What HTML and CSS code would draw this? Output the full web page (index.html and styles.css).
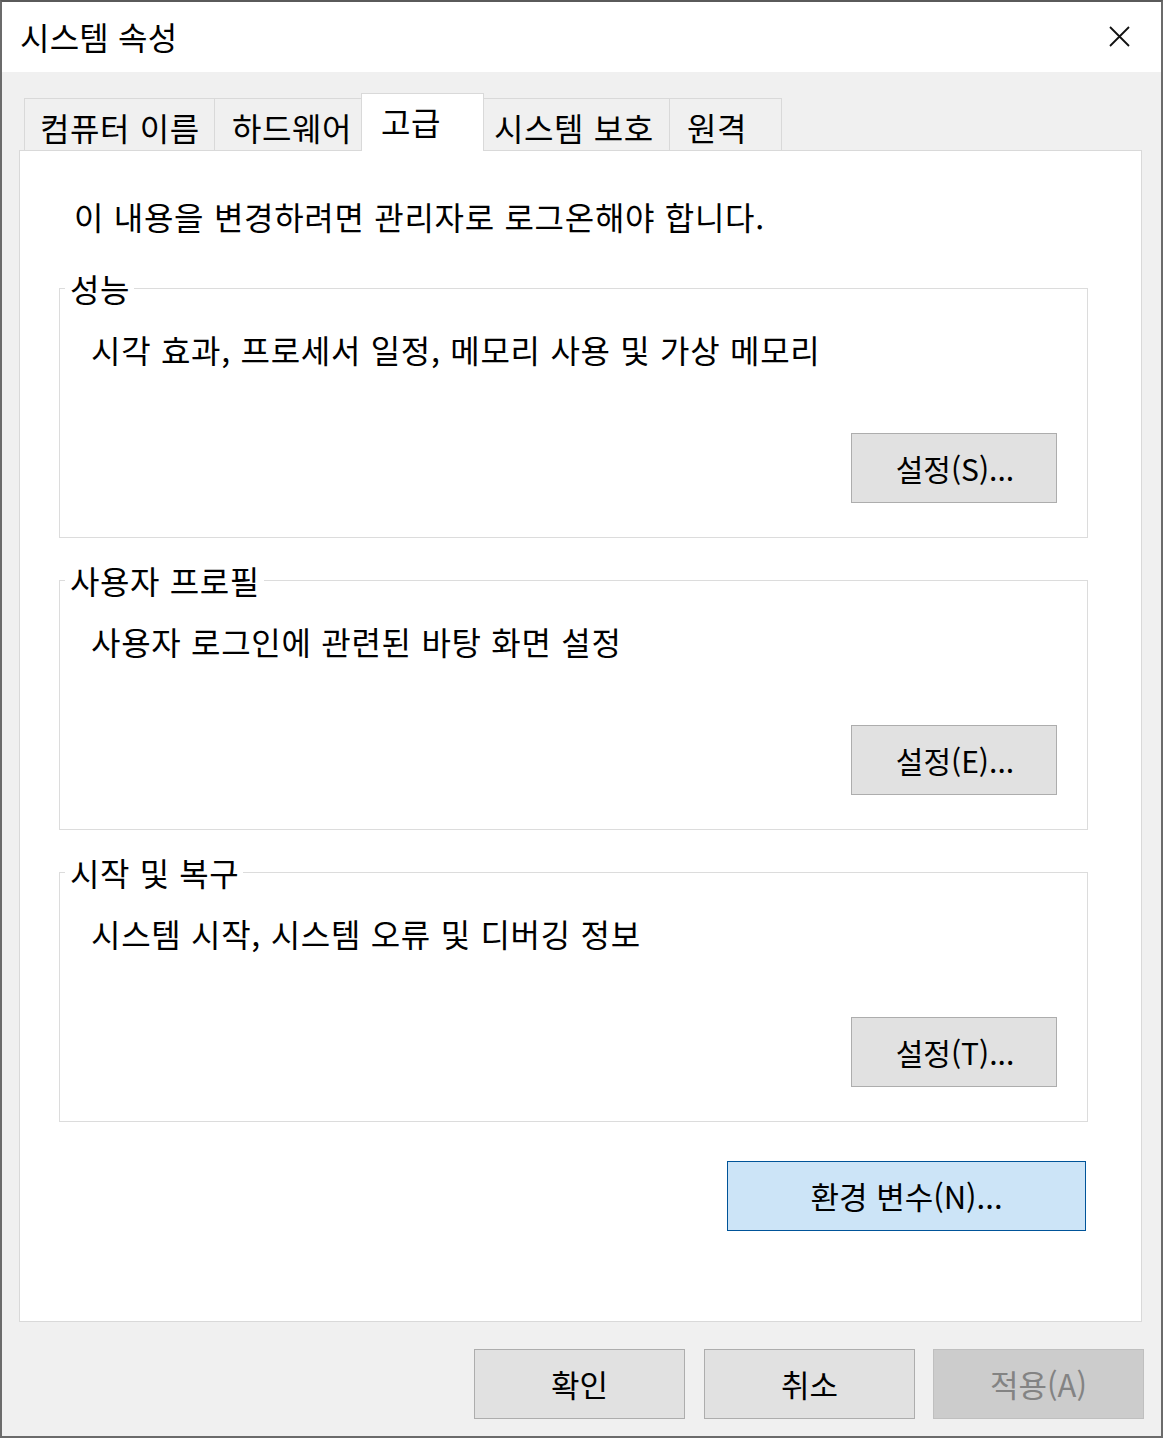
FILE: index.html
```html
<!DOCTYPE html>
<html lang="ko">
<head>
<meta charset="utf-8">
<title>시스템 속성</title>
<link rel="stylesheet" href="styles.css">
</head>
<body>
<div class="window">
  <div class="titlebar">
    <span class="title">시스템 속성</span>
    <button class="close" aria-label="닫기">
      <svg width="21" height="21" viewBox="0 0 21 21"><path d="M1 1 L20 20 M20 1 L1 20" stroke="#111" stroke-width="1.8" fill="none"/></svg>
    </button>
  </div>
  <div class="client">
    <div class="tabs">
      <div class="tab tab-name">컴퓨터 이름</div>
      <div class="tab tab-hw">하드웨어</div>
      <div class="tab tab-adv selected">고급</div>
      <div class="tab tab-prot after-selected">시스템 보호</div>
      <div class="tab tab-remote last">원격</div>
    </div>
    <div class="panel">
      <p class="intro">이 내용을 변경하려면 관리자로 로그온해야 합니다.</p>
      <div class="group">
        <span class="legend">성능</span>
        <p class="desc">시각 효과, 프로세서 일정, 메모리 사용 및 가상 메모리</p>
        <button class="btn btn-set">설정(S)...</button>
      </div>
      <div class="group">
        <span class="legend">사용자 프로필</span>
        <p class="desc">사용자 로그인에 관련된 바탕 화면 설정</p>
        <button class="btn btn-set">설정(E)...</button>
      </div>
      <div class="group">
        <span class="legend">시작 및 복구</span>
        <p class="desc">시스템 시작, 시스템 오류 및 디버깅 정보</p>
        <button class="btn btn-set">설정(T)...</button>
      </div>
      <button class="btn btn-env">환경 변수(N)...</button>
    </div>
    <div class="actions">
      <button class="btn btn-action btn-ok">확인</button>
      <button class="btn btn-action btn-cancel">취소</button>
      <button class="btn btn-action disabled">적용(A)</button>
    </div>
  </div>
</div>
</body>
</html>
```
FILE: styles.css
```css
html, body {
  margin: 0;
  padding: 0;
  background: #6b6b6b;
}
body {
  font-family: "Noto Sans CJK KR", "Noto Sans", sans-serif;
  font-size: 32px;
  line-height: 40px;
  letter-spacing: 0.7px;
  color: #000;
}
.window {
  width: 1163px;
  height: 1438px;
  box-sizing: border-box;
  border: 2px solid #6b6b6b;
  border-top-color: #5a5a5a;
  background: #f0f0f0;
  display: flex;
  flex-direction: column;
}
.titlebar {
  height: 70px;
  background: #fff;
  display: flex;
  align-items: center;
  justify-content: space-between;
  padding-left: 18px;
  padding-right: 31px;
  flex: none;
}
.title {
  line-height: 40px;
  margin-top: -2px;
  letter-spacing: 0.2px;
}
.close {
  border: 0;
  background: transparent;
  padding: 0;
  width: 21px;
  height: 21px;
  display: block;
  margin-top: -2px;
}
.close svg { display: block; }
.client {
  flex: 1;
  display: flex;
  flex-direction: column;
}
.tabs {
  display: flex;
  align-items: flex-end;
  margin-top: 21px;
  margin-left: 22px;
  height: 57px;
}
.tab {
  box-sizing: border-box;
  height: 52px;
  border-top: 1px solid #d9d9d9;
  border-left: 1px solid #d9d9d9;
  background: #f0f0f0;
  text-align: left;
  padding-top: 8px;
  white-space: nowrap;
  letter-spacing: 0.6px;
}
.tab-name { width: 190px; padding-left: 15px; }
.tab-hw { width: 147px; padding-left: 17px; }
.tab-adv { width: 123px; padding-left: 19px; }
.tab-prot { width: 185px; padding-left: 10px; }
.tab-remote { width: 113px; padding-left: 17px; }
.tab.selected {
  height: 58px;
  margin-bottom: -1px;
  background: #fff;
  border-right: 1px solid #d9d9d9;
  position: relative;
  z-index: 1;
  padding-top: 7px;
}
.tab.after-selected { border-left: 0; }
.tab.last { border-right: 1px solid #d9d9d9; }
.panel {
  box-sizing: border-box;
  margin-left: 17px;
  width: 1123px;
  height: 1172px;
  border: 1px solid #d9d9d9;
  background: #fff;
  display: flex;
  flex-direction: column;
  padding: 45px 0 0 39px;
}
.intro {
  margin: 0 0 52px 15px;
}
.group {
  position: relative;
  box-sizing: border-box;
  width: 1029px;
  height: 250px;
  border: 1px solid #dcdcdc;
  margin-bottom: 42px;
  padding: 40px 30px 34px 31px;
  display: flex;
  flex-direction: column;
}
.group:last-of-type { margin-bottom: 39px; }
.legend {
  position: absolute;
  top: -21px;
  left: 5px;
  padding: 0 4px 0 5px;
  background: #fff;
  white-space: nowrap;
  letter-spacing: 0.6px;
}
.desc { margin: 0; }
.btn {
  font-family: inherit;
  font-size: 31px;
  line-height: 40px;
  letter-spacing: 0;
  color: #000;
  box-sizing: border-box;
  height: 70px;
  border: 1px solid #adadad;
  background: #e1e1e1;
  padding: 0;
  display: flex;
  align-items: center;
  justify-content: center;
}
.btn-set {
  width: 206px;
  margin-top: auto;
  align-self: flex-end;
  font-size: 30px;
  padding-left: 2px;
}
.btn-env {
  width: 359px;
  align-self: flex-start;
  margin-left: 668px;
  background: #cce4f7;
  border-color: #005499;
}
.actions {
  display: flex;
  justify-content: flex-end;
  margin-top: 27px;
  padding-right: 17px;
}
.btn-action { width: 211px; }
.btn-ok { margin-right: 19px; }
.btn-cancel { margin-right: 18px; }
.btn-action.disabled {
  background: #cccccc;
  border-color: #bfbfbf;
  color: #838383;
}
```
